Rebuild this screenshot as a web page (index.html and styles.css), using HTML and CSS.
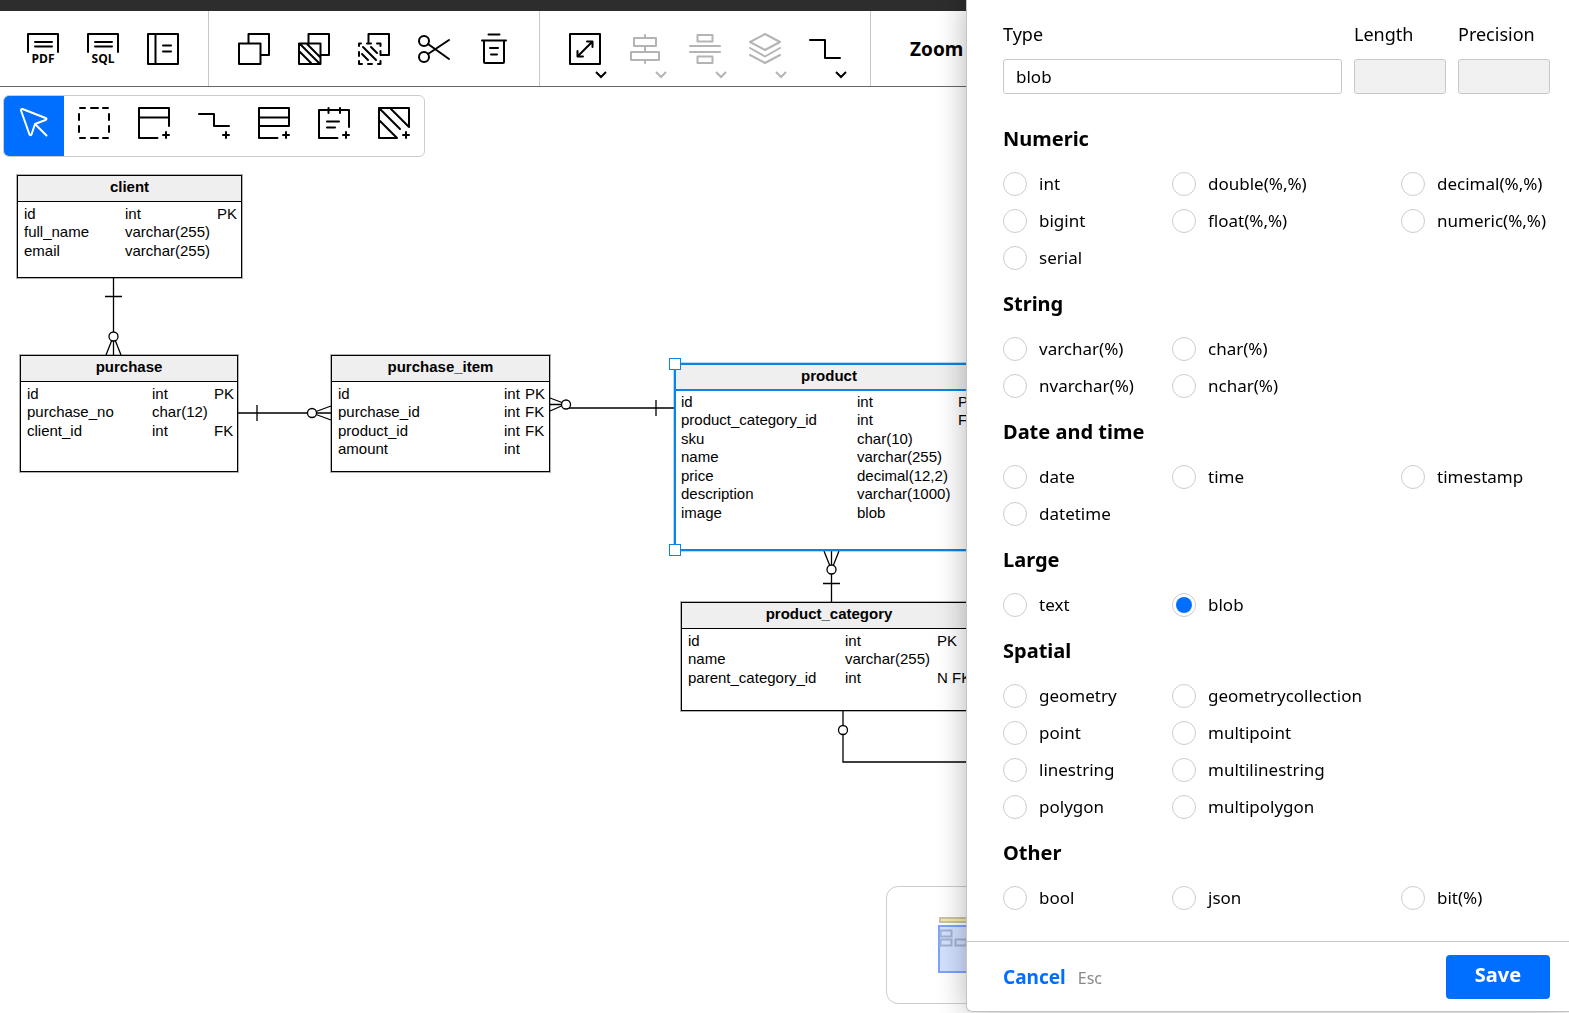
FILE: index.html
```
<!DOCTYPE html>
<html lang="en">
<head>
    <meta charset="UTF-8">
    <meta name="viewport" content="width=device-width, initial-scale=1.0">
    <title>Database Modeler</title>
    <link rel="stylesheet" href="styles.css">
</head>
<body>
    <div class="topbar"></div>
    <header class="toolbar">
        <div class="group">
            <button type="button" class="tool" aria-label="Export PDF">
                <svg class="icon" viewBox="0 0 32 32"><path d="M1 19V1H31V19M8 9H25M8 13.500H25"/><text x="16" y="30">PDF</text></svg>
            </button>
            <button type="button" class="tool" aria-label="Export SQL">
                <svg class="icon" viewBox="0 0 32 32"><path d="M1 19V1H31V19M8 9H25M8 13.500H25"/><text x="16" y="30">SQL</text></svg>
            </button>
            <button type="button" class="tool" aria-label="Documentation">
                <svg class="icon" viewBox="0 0 32 32"><path d="M1 1H31V31H1ZM8.500 1V31M16 12.500H24M16 18.500H24"/></svg>
            </button>
        </div>
        <div class="group">
            <button type="button" class="tool" aria-label="Copy">
                <svg class="icon" viewBox="0 0 32 32"><path d="M1 10.500H22.500V31H1ZM10.500 10V1H31V22H23"/></svg>
            </button>
            <button type="button" class="tool" aria-label="Copy area">
                <svg class="icon" viewBox="0 0 32 32"><path d="M1 10.500H22.500V31H1ZM10.500 10V1H31V22H23M2 11L21 30M9 11L22 24M1 18L13 30"/></svg>
            </button>
            <button type="button" class="tool" aria-label="Copy as shortcut">
                <svg class="icon" viewBox="0 0 32 32"><path d="M10.500 9V1H31V22H24M1 13V10.500H3M9 10.500H13M19 10.500H22.500V13M22.500 18V22M22.500 28V31H20M14 31H10M4 31H1V28M1 23V19M5 14L18 27M13 14L19 20M4 21L10 27"/></svg>
            </button>
            <button type="button" class="tool" aria-label="Cut">
                <svg class="icon" viewBox="0 0 32 32"><circle cx="6" cy="8" r="5"/><circle cx="6" cy="24" r="5"/><path d="M10 11L31 26M10 21L31 7"/></svg>
            </button>
            <button type="button" class="tool" aria-label="Delete">
                <svg class="icon" viewBox="0 0 32 32"><path d="M10.500 1.500H21.500M4 7.500H28M6 7.500V29Q6 30 7 30H25Q26 30 26 29V7.500M12 15H20M13 21.500H19"/></svg>
            </button>
        </div>
        <div class="group">
            <button type="button" class="tool" aria-label="Resize">
                <svg class="icon" viewBox="0 0 32 32"><path d="M1 1H31V31H1ZM8.500 23.500L23.500 8.500M18 8.500H23.500V14M8.500 18V23.500H14"/></svg>
                <svg class="chevron" viewBox="0 0 12 8"><path d="M1 1L6 6L11 1"/></svg>
            </button>
            <button type="button" class="tool" aria-label="Align" disabled>
                <svg class="icon" viewBox="0 0 32 32"><path d="M5 5H27V13H5ZM2 19H30V27H2ZM16 2V5M16 13V19M16 27V30"/></svg>
                <svg class="chevron" viewBox="0 0 12 8"><path d="M1 1L6 6L11 1"/></svg>
            </button>
            <button type="button" class="tool" aria-label="Distribute" disabled>
                <svg class="icon" viewBox="0 0 32 32"><path d="M8.500 2H23.500V8.500H8.500ZM1 13H31M1 19H31M8.500 23.500H23.500V30H8.500Z"/></svg>
                <svg class="chevron" viewBox="0 0 12 8"><path d="M1 1L6 6L11 1"/></svg>
            </button>
            <button type="button" class="tool" aria-label="Layers" disabled>
                <svg class="icon" viewBox="0 0 32 32"><path d="M16 1L31 9L16 17L1 9ZM1 15L16 23.500L31 15M1 22L16 30L31 22"/></svg>
                <svg class="chevron" viewBox="0 0 12 8"><path d="M1 1L6 6L11 1"/></svg>
            </button>
            <button type="button" class="tool" aria-label="Line style">
                <svg class="icon" viewBox="0 0 32 32"><path d="M1 7H16V25H31"/></svg>
                <svg class="chevron" viewBox="0 0 12 8"><path d="M1 1L6 6L11 1"/></svg>
            </button>
        </div>
        <div class="zoom-label">Zoom</div>
    </header>

    <main class="canvas">
        <div class="palette">
            <button type="button" class="tool active" aria-label="Select">
                <svg class="icon" viewBox="0 0 32 32"><path d="M18 18L28.500 28.500M4.500 2L27.500 11Q29.500 12 27.500 13L17 17L13.500 27.500Q12.500 29 11.500 27.500L3 3.500Q3 1.500 4.500 2Z"/></svg>
            </button>
            <button type="button" class="tool" aria-label="Select area">
                <svg class="icon" viewBox="0 0 32 32"><path d="M2 1H7M13 1H20M25 1H30M1 7V13M1 19V25M31 7V13M31 19V25M2 31H7M13 31H20M25 31H30"/></svg>
            </button>
            <button type="button" class="tool" aria-label="Add table">
                <svg class="icon" viewBox="0 0 32 32"><path d="M31 19V1H1V31H19.500M1 10.500H31M28 25V31M25 28H31"/></svg>
            </button>
            <button type="button" class="tool" aria-label="Add reference">
                <svg class="icon" viewBox="0 0 32 32"><path d="M1 7H16V19H31M28 25V31M25 28H31"/></svg>
            </button>
            <button type="button" class="tool" aria-label="Add view">
                <svg class="icon" viewBox="0 0 32 32"><path d="M31 19V1H1V31H19.500M1 10.500H31M1 19H31M28 25V31M25 28H31"/></svg>
            </button>
            <button type="button" class="tool" aria-label="Add note">
                <svg class="icon" viewBox="0 0 32 32"><path d="M31 20V3H1V31H19.500M10.500 1V6M22 1V6M9 14.500H21M9 20.500H17M28 25V31M25 28H31"/></svg>
            </button>
            <button type="button" class="tool" aria-label="Add area">
                <svg class="icon" viewBox="0 0 32 32"><path d="M31 20V1H1V31H19L1 13M2 2L22 22M12 1L31 20M28 25V31M25 28H31"/></svg>
            </button>
        </div>

        <svg class="links">
            <path d="M113.500 191V268M105 209.500H122M113.500 249L106 268M113.500 249L121 268"/>
            <circle cx="113.500" cy="249.500" r="4.500"/>
            <path d="M238 326H331M257 318V334M312 326L331 319M312 326L331 333"/>
            <circle cx="312" cy="326" r="4.500"/>
            <path d="M550 317.500H563M566 317L550 311M566 317L550 324M567 321H675M656 313V329"/>
            <circle cx="566" cy="317.500" r="4.500"/>
            <path d="M831.500 464V515M823 496.500H840M831.500 483L824 464M831.500 483L839 464"/>
            <circle cx="831.500" cy="482.500" r="4.500"/>
            <path d="M843 624V675H1060"/>
            <circle cx="843" cy="643" r="4.500"/>
        </svg>

        <section class="node client">
            <h2>client</h2>
            <table>
                <colgroup><col><col><col></colgroup>
                <tr><td>id</td><td>int</td><td>PK</td></tr>
                <tr><td>full_name</td><td>varchar(255)</td><td></td></tr>
                <tr><td>email</td><td>varchar(255)</td><td></td></tr>
            </table>
        </section>

        <section class="node purchase">
            <h2>purchase</h2>
            <table>
                <colgroup><col><col><col></colgroup>
                <tr><td>id</td><td>int</td><td>PK</td></tr>
                <tr><td>purchase_no</td><td>char(12)</td><td></td></tr>
                <tr><td>client_id</td><td>int</td><td>FK</td></tr>
            </table>
        </section>

        <section class="node purchase-item">
            <h2>purchase_item</h2>
            <table>
                <colgroup><col><col><col></colgroup>
                <tr><td>id</td><td>int</td><td>PK</td></tr>
                <tr><td>purchase_id</td><td>int</td><td>FK</td></tr>
                <tr><td>product_id</td><td>int</td><td>FK</td></tr>
                <tr><td>amount</td><td>int</td><td></td></tr>
            </table>
        </section>

        <section class="node product selected">
            <h2>product</h2>
            <table>
                <colgroup><col><col><col></colgroup>
                <tr><td>id</td><td>int</td><td>PK</td></tr>
                <tr><td>product_category_id</td><td>int</td><td>FK</td></tr>
                <tr><td>sku</td><td>char(10)</td><td></td></tr>
                <tr><td>name</td><td>varchar(255)</td><td></td></tr>
                <tr><td>price</td><td>decimal(12,2)</td><td></td></tr>
                <tr><td>description</td><td>varchar(1000)</td><td></td></tr>
                <tr><td>image</td><td>blob</td><td></td></tr>
            </table>
            <span class="handle top"></span>
            <span class="handle bottom"></span>
        </section>

        <section class="node product-category">
            <h2>product_category</h2>
            <table>
                <colgroup><col><col><col></colgroup>
                <tr><td>id</td><td>int</td><td>PK</td></tr>
                <tr><td>name</td><td>varchar(255)</td><td></td></tr>
                <tr><td>parent_category_id</td><td>int</td><td>N FK</td></tr>
            </table>
        </section>

        <div class="minimap">
            <svg viewBox="0 0 240 116">
                <rect class="map-note" x="53" y="31" width="90" height="4"/>
                <rect class="map-view" x="52" y="39" width="90" height="46"/>
                <path class="map-node" d="M53.500 43.500H64.500V49.500H53.500ZM53.500 52.500H64.500V58.500H53.500ZM68.500 52.500H79.500V58.500H68.500Z"/>
            </svg>
        </div>
    </main>

    <aside class="drawer">
        <form class="type-form" id="typeForm">
            <div class="drawer-body">
                <div class="fields">
                    <div class="field wide">
                        <label for="type">Type</label>
                        <input type="text" id="type" value="blob">
                    </div>
                    <div class="field">
                        <label for="length">Length</label>
                        <input type="text" id="length" disabled>
                    </div>
                    <div class="field">
                        <label for="precision">Precision</label>
                        <input type="text" id="precision" disabled>
                    </div>
                </div>

                <h3>Numeric</h3>
                <div class="options">
                    <label><input type="radio" name="datatype">int</label>
                    <label><input type="radio" name="datatype">double(%,%)</label>
                    <label><input type="radio" name="datatype">decimal(%,%)</label>
                    <label><input type="radio" name="datatype">bigint</label>
                    <label><input type="radio" name="datatype">float(%,%)</label>
                    <label><input type="radio" name="datatype">numeric(%,%)</label>
                    <label><input type="radio" name="datatype">serial</label>
                </div>

                <h3>String</h3>
                <div class="options two">
                    <label><input type="radio" name="datatype">varchar(%)</label>
                    <label><input type="radio" name="datatype">char(%)</label>
                    <label><input type="radio" name="datatype">nvarchar(%)</label>
                    <label><input type="radio" name="datatype">nchar(%)</label>
                </div>

                <h3>Date and time</h3>
                <div class="options">
                    <label><input type="radio" name="datatype">date</label>
                    <label><input type="radio" name="datatype">time</label>
                    <label><input type="radio" name="datatype">timestamp</label>
                    <label><input type="radio" name="datatype">datetime</label>
                </div>

                <h3>Large</h3>
                <div class="options two">
                    <label><input type="radio" name="datatype">text</label>
                    <label><input type="radio" name="datatype" checked>blob</label>
                </div>

                <h3>Spatial</h3>
                <div class="options two">
                    <label><input type="radio" name="datatype">geometry</label>
                    <label><input type="radio" name="datatype">geometrycollection</label>
                    <label><input type="radio" name="datatype">point</label>
                    <label><input type="radio" name="datatype">multipoint</label>
                    <label><input type="radio" name="datatype">linestring</label>
                    <label><input type="radio" name="datatype">multilinestring</label>
                    <label><input type="radio" name="datatype">polygon</label>
                    <label><input type="radio" name="datatype">multipolygon</label>
                </div>

                <h3>Other</h3>
                <div class="options">
                    <label><input type="radio" name="datatype">bool</label>
                    <label><input type="radio" name="datatype">json</label>
                    <label><input type="radio" name="datatype">bit(%)</label>
                </div>
            </div>
            <footer class="drawer-footer">
                <div class="cancel-box">
                    <button type="button" class="cancel">Cancel</button>
                    <span class="hint">Esc</span>
                </div>
                <button type="submit" class="save">Save</button>
            </footer>
        </form>
    </aside>
</body>
</html>
```

FILE: styles.css
```
* {
    box-sizing: border-box;
}

body {
    margin: 0;
    height: 100vh;
    display: flex;
    flex-direction: column;
    overflow: hidden;
    background: white;
    color: black;
    font-family: "Noto Sans", "Open Sans", sans-serif;
}

button {
    font-family: inherit;
    border: none;
    background: none;
    padding: 0;
    cursor: pointer;
}

/* toolbar */
.topbar {
    flex: none;
    height: 11px;
    background: #2d2d2d;
}

.toolbar {
    flex: none;
    display: flex;
    height: 76px;
    border-bottom: 1px solid #666;
}

.group {
    display: flex;
    align-items: center;
    padding: 0 15px;
    border-right: 1px solid #c8c8c8;
}

.group:first-child {
    padding-left: 13px;
}

.tool {
    position: relative;
    width: 60px;
    height: 60px;
    display: flex;
    align-items: center;
    justify-content: center;
    color: black;
}

.tool:disabled {
    color: #b4b4b4;
}

.icon {
    width: 32px;
    height: 32px;
    overflow: visible;
    fill: none;
    stroke: currentColor;
    stroke-width: 2;
    stroke-linecap: round;
    stroke-linejoin: round;
}

.icon text {
    fill: currentColor;
    stroke: none;
    font-family: "Open Sans", sans-serif;
    font-size: 12px;
    font-weight: bold;
    text-anchor: middle;
}

.chevron {
    position: absolute;
    right: 8px;
    bottom: 0;
    width: 12px;
    height: 8px;
    fill: none;
    stroke: currentColor;
    stroke-width: 2;
}

.zoom-label {
    padding-left: 39px;
    font-size: 19px;
    font-weight: bold;
    line-height: 76px;
}

/* canvas */
.canvas {
    flex: 1;
    position: relative;
    overflow: hidden;
    font-family: "Liberation Sans", Arial, sans-serif;
}

.palette {
    position: absolute;
    top: 8px;
    left: 3px;
    display: flex;
    background: white;
    border: 1px solid #ccc;
    border-radius: 6px;
    overflow: hidden;
}

.palette .tool {
    padding-bottom: 6px;
}

.palette .active {
    background: #006fff;
    color: white;
}

.links {
    position: absolute;
    top: 0;
    left: 0;
    width: 100%;
    height: 100%;
    fill: none;
    stroke: black;
    stroke-width: 1.3;
}

.links circle {
    fill: white;
}

.node {
    position: absolute;
    background: white;
    border: 1px solid black;
    outline: 1px solid rgba(0, 0, 0, 0.3);
}

.node h2 {
    margin: 0;
    height: 26px;
    font-size: 15px;
    line-height: 21px;
    text-align: center;
    background: #efefef;
    border-bottom: 1px solid black;
}

.node table {
    width: 100%;
    table-layout: fixed;
    border-collapse: collapse;
    margin: 2px 0 0 6px;
    font-size: 15px;
    white-space: nowrap;
}

.node td {
    padding: 0;
    height: 18px;
    line-height: 18px;
}

.node tr:nth-child(odd) td {
    height: 19px;
}

.client {
    left: 17px;
    top: 88px;
    width: 225px;
    height: 103px;
}

.client col:nth-child(1) { width: 101px; }
.client col:nth-child(2) { width: 92px; }

.purchase {
    left: 20px;
    top: 268px;
    width: 218px;
    height: 117px;
}

.purchase col:nth-child(1) { width: 125px; }
.purchase col:nth-child(2) { width: 62px; }

.purchase-item {
    left: 331px;
    top: 268px;
    width: 219px;
    height: 117px;
}

.purchase-item col:nth-child(1) { width: 166px; }
.purchase-item col:nth-child(2) { width: 21px; }

.product {
    left: 674px;
    top: 276px;
    width: 310px;
    height: 188px;
}

.product col:nth-child(1) { width: 176px; }
.product col:nth-child(2) { width: 101px; }

.product-category {
    left: 681px;
    top: 515px;
    width: 296px;
    height: 109px;
}

.product-category col:nth-child(1) { width: 157px; }
.product-category col:nth-child(2) { width: 92px; }

.selected {
    border: 2px solid #0a84e8;
    outline: 1px solid rgba(10, 132, 232, 0.3);
}

.selected h2 {
    border-bottom: 2px solid #0a84e8;
}

.selected table {
    margin: 1px 0 0 5px;
}

.handle {
    position: absolute;
    left: -7px;
    width: 12px;
    height: 12px;
    background: white;
    border: 1px solid #0a84e8;
}

.handle.top {
    top: -7px;
}

.handle.bottom {
    bottom: -7px;
}

.minimap {
    position: absolute;
    left: 886px;
    bottom: 9px;
    width: 242px;
    border: 1px solid #ccc;
    border-radius: 12px;
    background: white;
}

.minimap svg {
    display: block;
}

.map-note {
    fill: #f5e9a8;
    stroke: #c8c4a8;
    stroke-width: 2;
}

.map-view {
    fill: #d3e1ff;
    stroke: #7ba4ff;
    stroke-width: 2;
}

.map-node {
    fill: none;
    stroke: #a3b2d3;
    stroke-width: 2;
}

/* drawer */
.drawer {
    position: fixed;
    top: 0;
    right: 0;
    bottom: 1px;
    width: 603px;
    max-width: 100%;
    background: white;
    border-left: 1px solid #c4c4c4;
    border-bottom: 1px solid #c4c4c4;
    border-bottom-left-radius: 6px;
    box-shadow: 0 0 30px rgba(0, 0, 0, 0.3);
}

.type-form {
    height: 100%;
    display: flex;
    flex-direction: column;
}

.drawer-body {
    flex: 1;
    overflow: auto;
    padding: 22px 19px 0 36px;
}

.fields {
    display: flex;
    gap: 12px;
    margin-bottom: 18px;
}

.field {
    width: 92px;
}

.field.wide {
    flex: 1;
}

.field label {
    display: block;
    margin-bottom: 13px;
    font-size: 18px;
    line-height: 24px;
}

.field input {
    display: block;
    width: 100%;
    height: 35px;
    padding: 0 12px;
    border: 1px solid #c8c8c8;
    border-radius: 3px;
    background: white;
    font-family: inherit;
    font-size: 17px;
}

.field input:disabled {
    background: #f1f1f1;
}

.drawer h3 {
    margin: 0;
    font-size: 20px;
    line-height: 53px;
}

.options {
    display: grid;
    grid-template-columns: 169px 229px 1fr;
    grid-auto-rows: 37px;
    margin-bottom: 1px;
}

.options.two {
    grid-template-columns: 169px 1fr;
}

.options label {
    display: flex;
    align-items: center;
    gap: 12px;
    font-size: 17px;
    white-space: nowrap;
}

.options input {
    appearance: none;
    flex: none;
    width: 24px;
    height: 24px;
    margin: 0;
    border: 1px solid #ccc;
    border-radius: 50%;
    background: white;
}

.options input:checked {
    padding: 3px;
    background: #006fff content-box;
}

.drawer-footer {
    display: flex;
    align-items: center;
    justify-content: space-between;
    height: 70px;
    padding: 0 19px 0 36px;
    border-top: 1px solid #c8c8c8;
}

.cancel-box {
    display: flex;
    align-items: baseline;
    gap: 12px;
}

.cancel {
    color: #006fff;
    font-size: 19px;
    font-weight: bold;
}

.hint {
    color: #888;
    font-size: 16px;
}

.save {
    width: 104px;
    height: 44px;
    padding-bottom: 4px;
    border-radius: 4px;
    background: #006fff;
    color: white;
    font-size: 20px;
    font-weight: bold;
}
```
